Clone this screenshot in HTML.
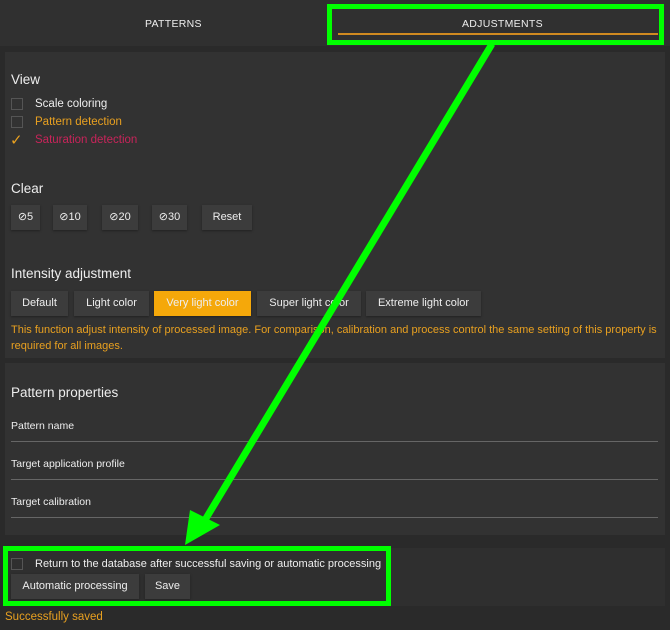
<!DOCTYPE html><html><head><style>
body{margin:0;width:670px;height:630px;background:#2a2a2a;font-family:"Liberation Sans",sans-serif;position:relative;overflow:hidden;color:#eee}
.abs{position:absolute}
.tabs{left:0;top:0;width:670px;height:46px;background:#303030}
.tab{top:18px;font-size:10.5px;color:#eee;letter-spacing:.3px}
.panel{background:#323232;left:5px;width:660px}
.h{font-size:13.5px;color:#eee}
.cb{width:10px;height:10px;border:1px solid #555}
.t{font-size:11.5px}
.btn{background:#3c3c3c;color:#eee;font-size:11px;height:25px;line-height:25px;text-align:center;box-shadow:0 1px 2px #222}
.line{left:11px;width:647px;height:1px;background:#666}
</style></head><body>
<div class="abs tabs"></div>
<div class="abs tab" style="left:145px">PATTERNS</div>
<div class="abs tab" style="left:462px">ADJUSTMENTS</div>
<div class="abs" style="left:338px;top:33px;width:320px;height:2px;background:#d08a20"></div>
<div class="abs panel" style="top:52px;height:306px"></div>
<div class="abs panel" style="top:363px;height:172px"></div>
<div class="abs panel" style="top:548px;height:58px;background:#2f2f2f"></div>
<div class="abs h" style="left:11px;top:72px">View</div>
<div class="abs cb" style="left:11px;top:98px"></div>
<div class="abs t" style="left:35px;top:98px">Scale coloring</div>
<div class="abs cb" style="left:11px;top:116px"></div>
<div class="abs t" style="left:35px;top:116px;color:#e8a020">Pattern detection</div>
<div class="abs" style="left:10px;top:131px;font-size:15px;color:#e8a020">✓</div>
<div class="abs t" style="left:35px;top:134px;color:#c8245a">Saturation detection</div>
<div class="abs h" style="left:11px;top:181px">Clear</div>
<div class="abs btn" style="left:11px;top:205px;width:29px">⊘5</div>
<div class="abs btn" style="left:53px;top:205px;width:34px">⊘10</div>
<div class="abs btn" style="left:102px;top:205px;width:36px">⊘20</div>
<div class="abs btn" style="left:152px;top:205px;width:35px">⊘30</div>
<div class="abs btn" style="left:202px;top:205px;width:50px">Reset</div>
<div class="abs h" style="left:11px;top:266px">Intensity adjustment</div>
<div class="abs btn" style="left:11px;top:291px;width:57px">Default</div>
<div class="abs btn" style="left:74px;top:291px;width:75px">Light color</div>
<div class="abs btn" style="left:154px;top:291px;width:97px;background:#f5a80a">Very light color</div>
<div class="abs btn" style="left:257px;top:291px;width:104px">Super light color</div>
<div class="abs btn" style="left:366px;top:291px;width:115px">Extreme light color</div>
<div class="abs" style="left:11px;top:322px;width:655px;color:#e8a020;line-height:16px;font-size:11px">This function adjust intensity of processed image. For comparison, calibration and process control the same setting of this property is required for all images.</div>
<div class="abs h" style="left:11px;top:385px">Pattern properties</div>
<div class="abs t" style="left:11px;top:420px;font-size:10.5px">Pattern name</div>
<div class="abs line" style="top:441px"></div>
<div class="abs t" style="left:11px;top:458px;font-size:10.5px">Target application profile</div>
<div class="abs line" style="top:479px"></div>
<div class="abs t" style="left:11px;top:496px;font-size:10.5px">Target calibration</div>
<div class="abs line" style="top:517px"></div>
<div class="abs cb" style="left:11px;top:558px"></div>
<div class="abs" style="left:35px;top:558px;font-size:11px">Return to the database after successful saving or automatic processing</div>
<div class="abs btn" style="left:11px;top:574px;width:128px">Automatic processing</div>
<div class="abs btn" style="left:145px;top:574px;width:45px">Save</div>
<div class="abs t" style="left:5px;top:611px;color:#e8a020">Successfully saved</div>
<div class="abs" style="left:327px;top:4px;width:327px;height:31px;border:5px solid #00ff00"></div>
<div class="abs" style="left:3px;top:546px;width:378px;height:50px;border:5px solid #00ff00"></div>
<svg class="abs" style="left:0;top:0" width="670" height="630"><line x1="492" y1="44" x2="205" y2="520" stroke="#00ff00" stroke-width="7"/><polygon points="185,545 190,510 220,525" fill="#00ff00"/></svg>
</body></html>
